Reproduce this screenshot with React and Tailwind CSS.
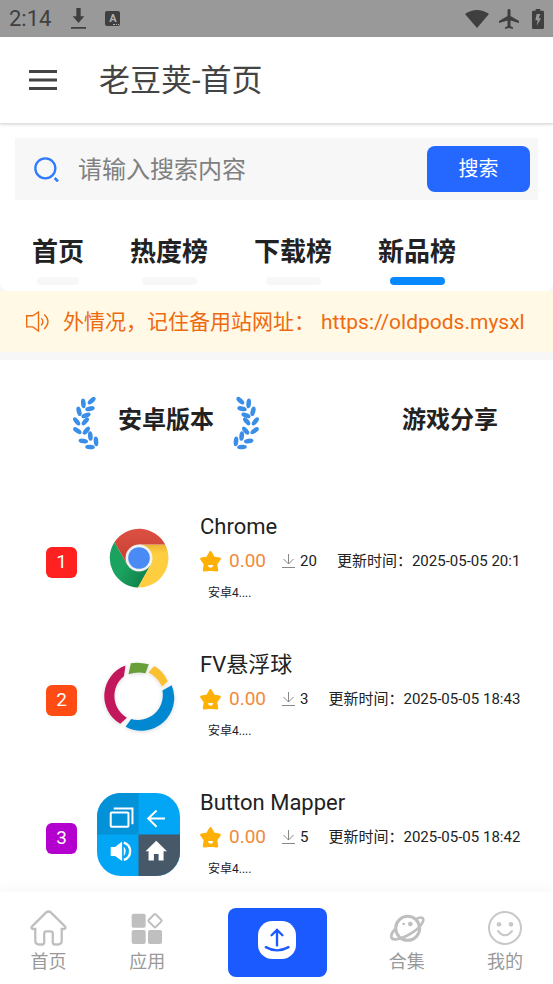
import { useState } from "react";
import { MdAirplanemodeActive } from "react-icons/md";

// Data
const tabs = [
  { name: "首页", bar: "w-[42px]" },
  { name: "热度榜", bar: "w-[55px]" },
  { name: "下载榜", bar: "w-[55px]" },
  { name: "新品榜", bar: "w-[55px]" },
];

const leaves = [
  [53, 11, -42], [28, 19, 85], [48, 35, -12], [15, 43, 75], [36, 55, -20],
  [8, 73, 52], [34, 73, -50], [10, 101, 35], [37, 101, -50], [49, 117, 85],
  [28, 132, 10], [66, 133, 85], [48, 150, 3],
];

// Icons
function Laurel({ className = "" }) {
  return (
    <svg viewBox="0 0 75 159" className={`h-[53px] w-[25px] overflow-visible ${className}`} fill="#3b8ee8">
      {leaves.map(([x, y, r]) => (
        <ellipse key={`${x}-${y}`} cx={x} cy={y} rx="14.5" ry="7" transform={`rotate(${r} ${x} ${y})`} />
      ))}
    </svg>
  );
}

function ChromeIcon() {
  return (
    <svg viewBox="0 0 60 60" className="size-[60px]">
      <defs>
        <linearGradient id="redShade" x1="0" y1="0" x2="0" y2="1">
          <stop offset="0" stopColor="#dd5144" />
          <stop offset="1" stopColor="#c43d31" />
        </linearGradient>
        <linearGradient id="greenShade" x1="0" y1="0" x2="1" y2="0.6">
          <stop offset="0.5" stopColor="#1aa260" />
          <stop offset="1" stopColor="#12804a" />
        </linearGradient>
        <linearGradient id="yellowShade" x1="0" y1="0" x2="0" y2="1">
          <stop offset="0" stopColor="#e9b432" />
          <stop offset="0.2" stopColor="#ffcd40" />
        </linearGradient>
      </defs>
      <path d="M18.3 36.7L5.5 14A29.5 29.5 0 0 0 29 59.5L41.7 36.7Z" fill="url(#greenShade)" />
      <path d="M30 16.6H56.2A29.5 29.5 0 0 1 29 59.5L41.7 36.7Z" fill="url(#yellowShade)" />
      <path d="M30 30L18.3 36.7L5.5 14A29.5 29.5 0 0 1 56.2 16.6H30Z" fill="url(#redShade)" />
      <circle cx="30" cy="30" r="13.5" fill="#f1f1f1" />
      <circle cx="30" cy="30" r="10.8" fill="#4a8af4" />
    </svg>
  );
}

function FvIcon() {
  return (
    <svg viewBox="0 0 250 250" className="size-[83px] drop-shadow-sm">
      <path d="M86 32A97 97 0 0 0 70 207L90 189A76 76 0 0 1 81 64Z" fill="#c2185b" />
      <path d="M102 25Q125 20 156 28L146 55Q120 50 95 58Z" fill="#689f38" />
      <path d="M172 33Q200 48 213 79L196 95Q182 66 155 53Z" fill="#fbc02d" />
      <path d="M225 91A99 99 0 0 1 86 216L103 193A75 75 0 0 0 197 107Z" fill="#0288d1" />
    </svg>
  );
}

function MapperIcon() {
  return (
    <svg viewBox="0 0 248 248" className="size-[83px] rounded-[24px]" fill="none">
      <path d="M0 0H248V248H0Z" fill="#03a5f5" />
      <path d="M0 0H124V124H0Z" fill="#0391d8" />
      <path d="M124 124H248V248H124Z" fill="#475869" />
      <rect x="41" y="58" width="53" height="43" rx="3" stroke="#fff" strokeWidth="6" />
      <path d="M50 46H106V93" stroke="#fff" strokeWidth="6" />
      <path d="M203 76H154M178 52L153 76L178 101" stroke="#fff" strokeWidth="6" />
      <path d="M41 161H54L75 145V203L54 188H41ZM80 160Q92 174 80 188Z" fill="#fff" />
      <path d="M80 148Q99 154 99 174Q99 194 80 200" stroke="#fff" strokeWidth="7" />
      <path d="M177 143L209 174H199V202H184V182H170V202H154V174H145Z" fill="#fff" />
    </svg>
  );
}

function StarIcon() {
  return (
    <svg viewBox="0 0 64 64" className="size-[21px]">
      <path
        d="M32 5L41 21L59 24L48 39L51 58L32 56L13 58L16 39L5 24L23 21Z"
        fill="#ffb005"
        stroke="#ffb005"
        strokeWidth="9"
        strokeLinejoin="round"
      />
      <path d="M25 43H40Q40 51 32 51Q25 51 25 43Z" fill="#fff" />
    </svg>
  );
}

const apps = [
  { name: "Chrome", icon: <ChromeIcon />, count: 20, time: "2025-05-05 20:1", color: "bg-[#ff2020]" },
  { name: "FV悬浮球", icon: <FvIcon />, count: 3, time: "2025-05-05 18:43", color: "bg-[#ff4b14]" },
  { name: "Button Mapper", icon: <MapperIcon />, count: 5, time: "2025-05-05 18:42", color: "bg-[#b400cf]" },
];

// Components
function StatusBar() {
  return (
    <div className="flex h-[37px] items-center justify-between bg-[#999] px-[9px] text-[#3f3f3f]">
      <div className="flex items-center">
        <span className="pt-px text-[22px] leading-6">2:14</span>
        <svg viewBox="0 0 45 63" className="ml-5 h-[21px] w-[15px]" fill="#3f3f3f">
          <path d="M16 0H29V25H40L22.500 45L5 25H16ZM0 57H45V62H0Z" />
        </svg>
        <span className="relative ml-[19px] h-[15px] w-[15px] rounded-[2px] bg-[#3f3f3f] text-center text-[11px] font-bold leading-[15px] text-[#b0b0b0]">
          A
          <span className="absolute bottom-px right-px h-px w-[6px] border-t border-dotted border-[#b0b0b0]" />
        </span>
      </div>
      <div className="flex items-center">
        <svg viewBox="0 0 72 54" className="h-[18px] w-[24px]" fill="#3f3f3f">
          <path d="M0 12Q36 -12 72 12L36 54Z" />
        </svg>
        <MdAirplanemodeActive className="ml-2 size-6" />
        <svg viewBox="0 0 36 60" className="ml-[11px] h-5 w-3">
          <path d="M11 0H25V5H32Q36 5 36 9V56Q36 60 32 60H4Q0 60 0 56V9Q0 5 4 5H11Z" fill="#3f3f3f" />
          <path d="M14 15H25L20 28H27L14 51L17 34H10Z" fill="#999" />
        </svg>
      </div>
    </div>
  );
}

function Header() {
  return (
    <header className="relative z-10 flex h-[87px] items-center border-b border-[#e2e2e2] bg-white pl-[29px] text-[#444] shadow-sm">
      <button aria-label="菜单">
        <svg viewBox="0 0 28 20" className="h-5 w-7" fill="#444">
          <path d="M0 0H28V3H0ZM0 8.500H28V11.500H0ZM0 17H28V20H0Z" />
        </svg>
      </button>
      <h1 className="ml-[42px] pt-[2px] text-[31px] leading-10">老豆荚-首页</h1>
    </header>
  );
}

function SearchBar() {
  return (
    <form className="mx-[15px] flex h-[62px] items-center bg-[#f7f7f7] pl-[19px] pr-2" onSubmit={(e) => e.preventDefault()}>
      <svg viewBox="0 0 75 75" className="size-[25px] shrink-0" fill="none" stroke="#2e7bff" strokeWidth="7">
        <circle cx="34" cy="34" r="30" />
        <path d="M62 63L72 73" strokeWidth="8" />
      </svg>
      <input
        type="text"
        aria-label="搜索内容"
        placeholder="请输入搜索内容"
        className="ml-[19px] min-w-0 flex-1 bg-transparent pt-[2px] text-[24px] leading-9 outline-none placeholder:text-[#808080]"
      />
      <button className="h-[46px] w-[103px] rounded-lg bg-[#2468ff] text-[20px] text-white">搜索</button>
    </form>
  );
}

function Notice() {
  return (
    <div className="flex h-[61px] items-center bg-[#fff9e6] pl-[26px] pr-[24px] text-[21px] text-[#ee6a10]">
      <svg viewBox="0 0 68 62" className="h-[21px] w-[23px] shrink-0" fill="none" stroke="#ee6a10" strokeWidth="4">
        <path d="M2 14H20L37 3V59L20 47H2Z" />
        <path d="M45 21Q55 31 45 42M54 10Q76 31 54 53" />
      </svg>
      <p className="ml-[14px] overflow-hidden whitespace-nowrap leading-8">
        外情况，记住备用站网址：
        <a href="#notice" className="ml-[6px]">https://oldpods.mysxl</a>
      </p>
    </div>
  );
}

function AppRow({ app, rank }) {
  return (
    <li className="flex items-center pl-[46px] pr-[30px]">
      <span className={`mt-2 flex size-[31px] shrink-0 items-center justify-center rounded-md text-[19px] text-white ${app.color}`}>
        {rank}
      </span>
      <div className="ml-5 flex size-[83px] shrink-0 items-center justify-center">{app.icon}</div>
      <div className="ml-5 min-w-0 flex-1">
        <h3 className="text-[22px] leading-7 text-[#222]">{app.name}</h3>
        <div className="mt-[6px] flex h-7 items-center overflow-hidden whitespace-nowrap text-[15px] text-[#222]">
          <span className="flex shrink-0 items-center gap-2 text-[19px] text-[#f08a3c]">
            <StarIcon />
            0.00
          </span>
          <svg viewBox="0 0 13 14" className="ml-4 h-[14px] w-[13px] shrink-0" fill="none" stroke="#888">
            <path d="M6.500 0V10M1.500 5L6.500 10L11.500 5M0 13.500H13" />
          </svg>
          <span className="ml-[5px]">{app.count}</span>
          <span className="ml-5">更新时间：{app.time}</span>
        </div>
        <p className="ml-2 mt-2 text-[12px] leading-5 text-[#1a1a2a]">安卓4....</p>
      </div>
    </li>
  );
}

function BottomNav() {
  const item = "flex flex-col items-center text-[18px] leading-6 text-[#999]";

  return (
    <nav className="mt-auto flex h-[92px] items-center justify-between bg-white px-[30px] pt-2 shadow-[0_-4px_12px_rgba(0,0,0,0.03)]">
      <button className={item}>
        <svg viewBox="0 0 112 108" className="mb-1 h-9 w-[37px]" fill="none" stroke="#bfbfbf" strokeWidth="7">
          <path d="M49 7Q56 1 63 7L106 49Q110 56 102 57H96V92Q96 104 84 104H75Q69 104 69 97V71Q69 64 62 64H50Q43 64 43 71V97Q43 104 37 104H28Q16 104 16 92V57H10Q2 56 6 49Z" />
        </svg>
        首页
      </button>
      <button className={item}>
        <svg viewBox="-7 -9 108 108" className="mb-1 size-9" fill="#bfbfbf">
          <rect x="1" y="2" width="42" height="42" rx="6" />
          <rect x="1" y="51" width="42" height="42" rx="6" />
          <rect x="50" y="51" width="42" height="42" rx="6" />
          <rect x="56" y="8" width="30" height="30" rx="3" transform="rotate(45 71 23)" fill="none" stroke="#bfbfbf" strokeWidth="6" />
        </svg>
        应用
      </button>
      <button aria-label="上传" className="flex h-[69px] w-[99px] items-start justify-center rounded-lg bg-[#1b5aff] pt-[13px]">
        <svg viewBox="0 0 112 112" className="size-[38px]" fill="none" stroke="#1b5aff" strokeWidth="7" strokeLinecap="round">
          <rect width="112" height="112" rx="42" fill="#fff" stroke="none" />
          <path d="M56 26V72M40 42L56 26L72 42M23 77Q56 96 90 77" />
        </svg>
      </button>
      <button className={item}>
        <svg viewBox="-2 -13 108 108" className="mb-1 size-9" fill="none" stroke="#bfbfbf" strokeWidth="8">
          <circle cx="54" cy="42" r="36" strokeWidth="9" />
          <path d="M80 14C98 4 106 12 97 27C86 46 56 64 38 70C20 77 6 77 5 68C4 58 12 48 20 42" />
          <circle cx="42" cy="29" r="4" fill="#bfbfbf" stroke="none" />
          <circle cx="62" cy="29" r="7" fill="#bfbfbf" stroke="none" />
        </svg>
        合集
      </button>
      <button className={item}>
        <svg viewBox="0 0 108 108" className="mb-1 size-9" fill="none" stroke="#c8c8c8" strokeWidth="6">
          <circle cx="54" cy="54" r="48" />
          <path d="M33 63Q54 89 75 63" strokeLinecap="round" />
          <circle cx="36" cy="43" r="7" fill="#c8c8c8" stroke="none" />
          <circle cx="72" cy="43" r="7" fill="#c8c8c8" stroke="none" />
        </svg>
        我的
      </button>
    </nav>
  );
}

function App() {
  const [active, setActive] = useState("新品榜");

  return (
    <div className="flex min-h-screen flex-col bg-white font-['Roboto','Noto_Sans_CJK_SC',sans-serif]">
      <StatusBar />
      <Header />
      <div className="bg-[#f7f7f7] pb-2">
        <section className="rounded-b-lg bg-white pt-[14px]">
          <SearchBar />
          <div className="mt-[34px] flex gap-[46px] pb-[6px] pl-[32px]">
            {tabs.map((tab) => (
              <button key={tab.name} onClick={() => setActive(tab.name)} className="flex flex-col items-center text-[#222]">
                <span className="text-[26px] font-bold leading-9">{tab.name}</span>
                <span className={`mt-[7px] h-2 rounded-full ${tab.bar} ${active === tab.name ? "bg-[#0688ff]" : "bg-[#f7f7f7]"}`} />
              </button>
            ))}
          </div>
        </section>
        <Notice />
      </div>
      <main className="pt-[37px]">
        <div className="flex items-start justify-between pl-[74px] pr-[55px] text-[24px] font-bold leading-[46px] text-[#222]">
          <button className="flex items-start gap-[19px]">
            <Laurel />
            安卓版本
            <Laurel className="-scale-x-100" />
          </button>
          <button>游戏分享</button>
        </div>
        <ul className="mt-[63px] flex flex-col gap-12">
          {apps.map((app, i) => (
            <AppRow key={app.name} app={app} rank={i + 1} />
          ))}
        </ul>
      </main>
      <BottomNav />
    </div>
  );
}

export default App;
